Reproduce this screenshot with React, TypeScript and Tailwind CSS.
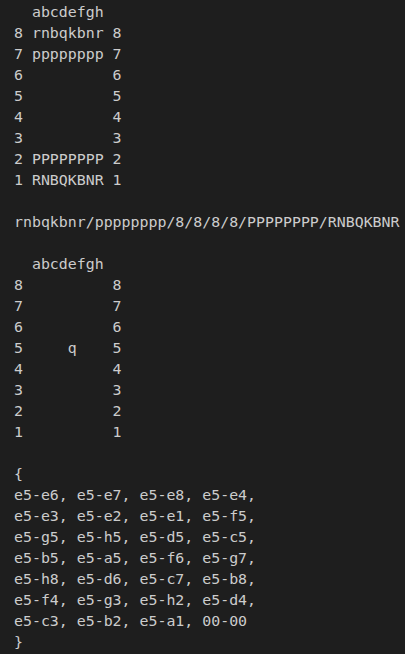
const lines = [
  "  abcdefgh",
  "8 rnbqkbnr 8",
  "7 pppppppp 7",
  "6          6",
  "5          5",
  "4          4",
  "3          3",
  "2 PPPPPPPP 2",
  "1 RNBQKBNR 1",
  "",
  "rnbqkbnr/pppppppp/8/8/8/8/PPPPPPPP/RNBQKBNR",
  "",
  "  abcdefgh",
  "8          8",
  "7          7",
  "6          6",
  "5     q    5",
  "4          4",
  "3          3",
  "2          2",
  "1          1",
  "",
  "{",
  "e5-e6, e5-e7, e5-e8, e5-e4,",
  "e5-e3, e5-e2, e5-e1, e5-f5,",
  "e5-g5, e5-h5, e5-d5, e5-c5,",
  "e5-b5, e5-a5, e5-f6, e5-g7,",
  "e5-h8, e5-d6, e5-c7, e5-b8,",
  "e5-f4, e5-g3, e5-h2, e5-d4,",
  "e5-c3, e5-b2, e5-a1, 00-00",
  "}",
];

export default function App() {
  return (
    <div className="min-h-[654px] w-full overflow-hidden bg-[#1e1e1e] pl-[14px] pt-[2px]">
      <pre className="m-0 font-['DejaVu_Sans_Mono',monospace] text-[14.9px] leading-[21px] text-[#cccccc]">
        {lines.map((l, i) => (
          <div key={i} className="h-[21px] whitespace-pre">
            {l}
          </div>
        ))}
      </pre>
    </div>
  );
}
